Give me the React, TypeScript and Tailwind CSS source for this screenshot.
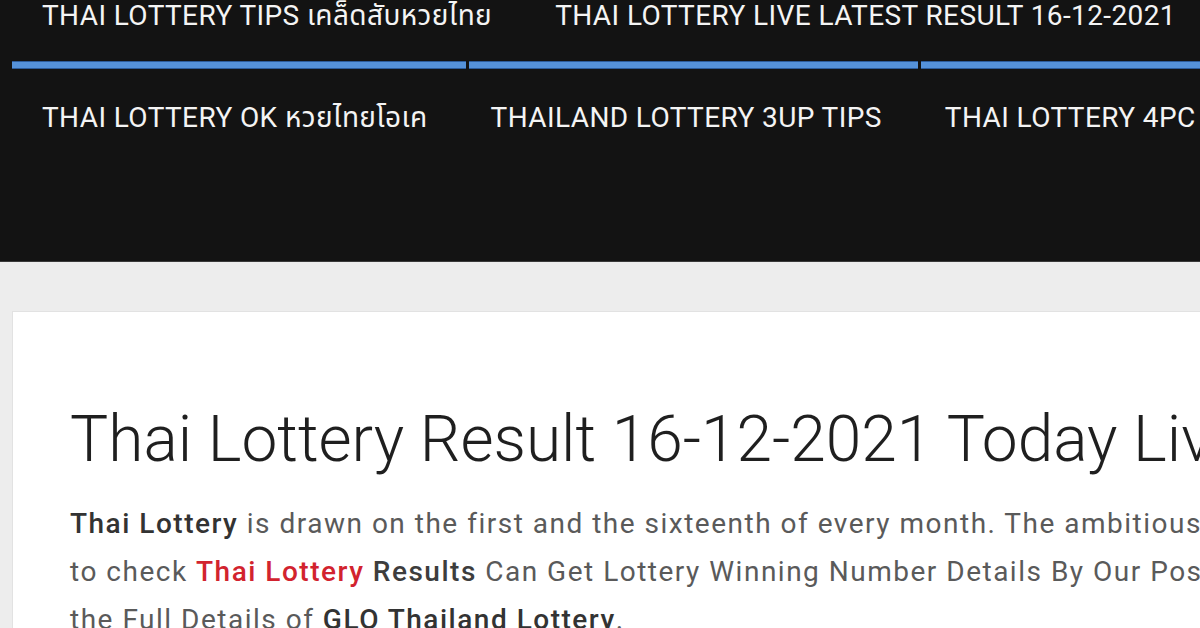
const topLinks = [
  "THAI LOTTERY TIPS เคล็ดสับหวยไทย",
  "THAI LOTTERY LIVE LATEST RESULT 16-12-2021",
  "THAI LOTTERY SAMBUNG",
];

const bottomLinks = [
  "THAI LOTTERY OK หวยไทยโอเค",
  "THAILAND LOTTERY 3UP TIPS",
  "THAI LOTTERY 4PC FIRST PAPER",
];

const navFont = "font-['Roboto','Noto_Sans_Thai','Noto_Sans',sans-serif]";

function NavRow({ links }: { links: string[] }) {
  return (
    <ul className={`flex gap-[63px] pl-[42px] whitespace-nowrap text-[28px] leading-[32px] tracking-[0.4px] text-[#f4f4f4] ${navFont}`}>
      {links.map((link) => (
        <li key={link} className="shrink-0">
          {link}
        </li>
      ))}
    </ul>
  );
}

function Header() {
  return (
    <header className="h-[262px] shrink-0 bg-[#131313] border-b border-[#3a3a3a]">
      <NavRow links={topLinks} />
      <div className="mt-[29px] ml-[12px] flex gap-[3px] h-[8px]">
        <div className="w-[454px] bg-[#5592da] border-y border-[#2c5c9c]" />
        <div className="w-[449px] bg-[#5592da] border-y border-[#2c5c9c]" />
        <div className="flex-1 bg-[#5592da] border-y border-[#2c5c9c]" />
      </div>
      <div className="mt-[33px]">
        <NavRow links={bottomLinks} />
      </div>
    </header>
  );
}

export default function App() {
  return (
    <div className="w-[1200px] h-[628px] overflow-hidden bg-[#ededed] flex flex-col">
      <Header />
      <main className="mt-[49px] ml-[12px] flex-1 bg-white border-l border-t border-[#e2e2e2] pl-[57px] pt-[92px] font-['Roboto',sans-serif]">
        <h1 className="text-[64px] leading-[72px] font-light text-[#1f1f1f] whitespace-nowrap">
          Thai Lottery Result 16-12-2021 Today Live Winner List
        </h1>
        <p className="mt-[24px] text-[28px] leading-[48px] tracking-[1.5px] text-[#5a5a5a] whitespace-nowrap">
          <strong className="font-medium text-[#333]">Thai Lottery</strong> is drawn on the first and the
          sixteenth of every month. The ambitious people who want
          <br />
          to check <span className="font-medium text-[#d2232e]">Thai Lottery</span>{" "}
          <strong className="font-medium text-[#3d3d3d]">Results</strong> Can Get Lottery Winning Number
          Details By Our Post and Know
          <br />
          the Full Details of <strong className="font-medium text-[#333]">GLO Thailand Lottery</strong>.
        </p>
      </main>
    </div>
  );
}
